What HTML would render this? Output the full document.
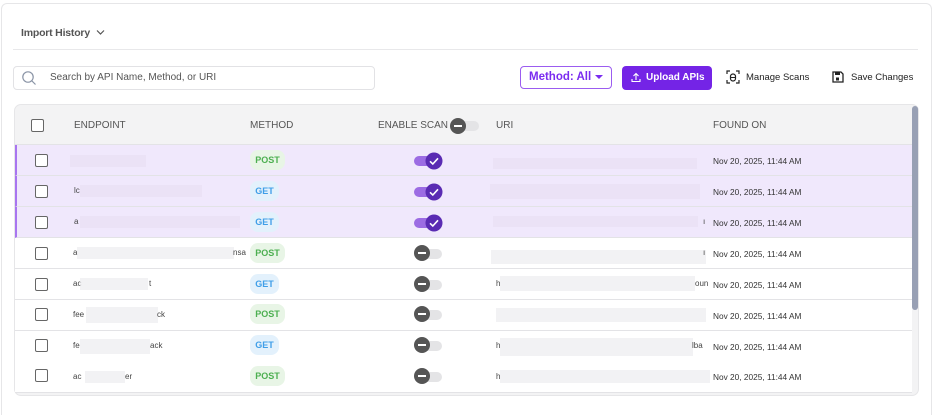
<!DOCTYPE html>
<html><head><meta charset="utf-8"><style>
*{box-sizing:border-box;margin:0;padding:0}
html,body{width:936px;height:415px;overflow:hidden}
body{background:#fff;font-family:"Liberation Sans",sans-serif;position:relative;color:#333}
.a{position:absolute}
.card{left:1px;top:3px;width:931px;height:412px;border:1px solid #e6e6e8;border-bottom:none;border-radius:6px 6px 0 0;background:#fff}
.hdr{font-size:10px;color:#555}
.cb{width:13px;height:13px;border:1.5px solid #666;border-radius:2px;background:#fff}
.row{left:15px;width:897px;height:31px;border-bottom:1px solid #e3e3e6}
.sel{background:#f0e8fc}
.ep{font-size:8px;color:#444}
.bl{background:#ededf0;height:12px;opacity:.7}
.m{font-size:9px;font-weight:bold;border-radius:8px;height:20px;line-height:20px;text-align:center}
.post{background:#e8f5e6;color:#4caf50;width:35px}
.get{background:#e3f1fc;color:#3f9ee8;width:29px}
.d{font-size:8.3px;color:#333}
.ton{width:27px;height:10px;border-radius:5px;background:#9c6ce3}
.toff{width:27px;height:10px;border-radius:5px;background:#e4e4e6}
.koff{width:16px;height:16px;border-radius:50%;background:#555}
.koff:after{content:"";position:absolute;left:4px;top:7px;width:8px;height:2px;background:#fff}
</style></head><body>
<div class="a card"></div>
<div class="a" style="left:21px;top:27px;font-size:10.5px;color:#555;font-weight:bold;letter-spacing:-.2px">Import History</div>
<svg class="a" style="left:96px;top:29px" width="9" height="7"><path d="M1 1.5 4.5 5 8 1.5" fill="none" stroke="#555" stroke-width="1.2"/></svg>
<div class="a" style="left:13px;top:49px;width:905px;height:1px;background:#e8e8ea"></div>
<div class="a" style="left:13px;top:66px;width:362px;height:24px;border:1px solid #e2e2e5;border-radius:4px"></div>
<svg class="a" style="left:21px;top:70px" width="16" height="16"><circle cx="7" cy="7" r="5.2" fill="none" stroke="#8a94a6" stroke-width="1.2"/><path d="M11 11 14.5 14.5" stroke="#8a94a6" stroke-width="1.2"/></svg>
<div class="a" style="left:50px;top:72px;font-size:10px;color:#555">Search by API Name, Method, or URI</div>
<div class="a" style="left:520px;top:66px;width:92px;height:23px;border:1.5px solid #9b5cf0;border-radius:4px;font-size:11.5px;font-weight:bold;color:#7b2cf0;padding:4px 0 0 8px">Method: All</div>
<svg class="a" style="left:595px;top:75px" width="8" height="5"><path d="M0 0h8L4 4z" fill="#7b2cf0"/></svg>
<div class="a" style="left:622px;top:66px;width:90px;height:24px;background:#7424e6;border-radius:4px;color:#fff;font-size:10px;font-weight:bold;padding:6px 0 0 24px">Upload APIs</div>
<svg class="a" style="left:631px;top:72px" width="10" height="11"><path d="M5 8V1.5M2.5 4 5 1.5 7.5 4M1 7v2.5h8V7" fill="none" stroke="#fff" stroke-width="1.1"/></svg>
<svg class="a" style="left:726px;top:70px" width="14" height="14"><path d="M1 4V1h3M10 1h3v3M13 10v3h-3M4 13H1v-3" fill="none" stroke="#222" stroke-width="1.2"/><rect x="4.5" y="4" width="5" height="7" rx="2.5" fill="none" stroke="#222" stroke-width="1.2"/><path d="M5 7.5h4" stroke="#222"/></svg>
<div class="a" style="left:746px;top:72px;font-size:9.5px;color:#222">Manage Scans</div>
<svg class="a" style="left:832px;top:71px" width="12" height="12"><path d="M1 1h8l2 2v8H1z" fill="none" stroke="#222" stroke-width="1.3"/><rect x="3" y="1" width="5" height="3" fill="#222"/><rect x="4" y="6.5" width="3" height="3" fill="#222"/></svg>
<div class="a" style="left:851px;top:72px;font-size:9.5px;color:#222">Save Changes</div>

<div class="a" style="left:14px;top:104px;width:905px;height:292px;border:1px solid #e6e6e8;border-radius:7px;background:#f3f3f4;overflow:hidden"></div>
<div class="a" style="left:15px;top:105px;width:897px;height:40px;background:#f3f3f4;border-bottom:1px solid #e3e3e6;border-radius:7px 0 0 0"></div>
<div class="a cb" style="left:31px;top:119px"></div>
<div class="a hdr" style="left:74px;top:120px">ENDPOINT</div>
<div class="a hdr" style="left:250px;top:120px">METHOD</div>
<div class="a hdr" style="left:378px;top:120px">ENABLE SCAN</div>
<div class="a toff" style="left:452px;top:121px"></div><div class="a koff" style="left:450px;top:118px"></div>
<div class="a hdr" style="left:496px;top:120px">URI</div>
<div class="a hdr" style="left:713px;top:120px">FOUND ON</div>
<div class="a" style="left:912px;top:106px;width:6px;height:204px;background:#98a0b4;border-radius:3px"></div>

<div class="a row sel" style="top:145px;border-left:2px solid #a875f0"></div>
<div class="a row sel" style="top:176px;border-left:2px solid #a875f0"></div>
<div class="a row sel" style="top:207px;border-left:2px solid #a875f0"></div>
<div class="a row" style="top:238px;background:#fff"></div>
<div class="a row" style="top:269px;background:#fff"></div>
<div class="a row" style="top:300px;background:#fff"></div>
<div class="a row" style="top:331px;background:#fff"></div>
<div class="a row" style="top:361px;background:#fff;height:32px"></div>

<div class="a cb" style="left:35px;top:154px"></div>
<div class="a cb" style="left:35px;top:185px"></div>
<div class="a cb" style="left:35px;top:216px"></div>
<div class="a cb" style="left:35px;top:247px"></div>
<div class="a cb" style="left:35px;top:278px"></div>
<div class="a cb" style="left:35px;top:308px"></div>
<div class="a cb" style="left:35px;top:339px"></div>
<div class="a cb" style="left:35px;top:369px"></div>

<div class="a bl" style="left:70px;top:155px;width:76px;background:#e8e0f4"></div>
<div class="a ep" style="left:74px;top:186px">lc</div><div class="a bl" style="left:80px;top:185px;width:122px;background:#e8e0f4"></div>
<div class="a ep" style="left:74px;top:217px">a</div><div class="a bl" style="left:80px;top:216px;width:160px;background:#e8e0f4"></div>
<div class="a ep" style="left:73px;top:248px">a</div><div class="a bl" style="left:77px;top:247px;width:157px"></div><div class="a ep" style="left:233px;top:248px">nsa</div>
<div class="a ep" style="left:73px;top:279px">ac</div><div class="a bl" style="left:80px;top:278px;width:68px"></div><div class="a ep" style="left:149px;top:279px">t</div>
<div class="a ep" style="left:73px;top:310px">fee</div><div class="a bl" style="left:86px;top:307px;width:72px;height:16px"></div><div class="a ep" style="left:157px;top:310px">ck</div>
<div class="a ep" style="left:73px;top:341px">fe</div><div class="a bl" style="left:80px;top:339px;width:70px;height:15px"></div><div class="a ep" style="left:150px;top:341px">ack</div>
<div class="a ep" style="left:73px;top:372px">ac</div><div class="a bl" style="left:85px;top:371px;width:40px"></div><div class="a ep" style="left:125px;top:372px">er</div>

<div class="a m post" style="left:250px;top:150px">POST</div>
<div class="a m get" style="left:250px;top:181px">GET</div>
<div class="a m get" style="left:250px;top:212px">GET</div>
<div class="a m post" style="left:250px;top:243px">POST</div>
<div class="a m get" style="left:250px;top:274px">GET</div>
<div class="a m post" style="left:250px;top:304px">POST</div>
<div class="a m get" style="left:250px;top:335px">GET</div>
<div class="a m post" style="left:250px;top:366px">POST</div>

<div class="a ton" style="left:414px;top:156px"></div><svg class="a" style="left:425px;top:152px" width="18" height="18"><circle cx="9" cy="9" r="8.5" fill="#5a2bb3"/><path d="M5 9.3 7.8 12 13 6.3" fill="none" stroke="#fff" stroke-width="1.6"/></svg>
<div class="a ton" style="left:414px;top:187px"></div><svg class="a" style="left:425px;top:183px" width="18" height="18"><circle cx="9" cy="9" r="8.5" fill="#5a2bb3"/><path d="M5 9.3 7.8 12 13 6.3" fill="none" stroke="#fff" stroke-width="1.6"/></svg>
<div class="a ton" style="left:414px;top:218px"></div><svg class="a" style="left:425px;top:214px" width="18" height="18"><circle cx="9" cy="9" r="8.5" fill="#5a2bb3"/><path d="M5 9.3 7.8 12 13 6.3" fill="none" stroke="#fff" stroke-width="1.6"/></svg>
<div class="a toff" style="left:415px;top:249px"></div><div class="a koff" style="left:414px;top:245px"></div>
<div class="a toff" style="left:415px;top:280px"></div><div class="a koff" style="left:414px;top:276px"></div>
<div class="a toff" style="left:415px;top:310px"></div><div class="a koff" style="left:414px;top:306px"></div>
<div class="a toff" style="left:415px;top:341px"></div><div class="a koff" style="left:414px;top:337px"></div>
<div class="a toff" style="left:415px;top:372px"></div><div class="a koff" style="left:414px;top:368px"></div>

<div class="a bl" style="left:493px;top:158px;width:204px;height:11px;background:#e8e0f4"></div>
<div class="a bl" style="left:490px;top:184px;width:210px;height:15px;background:#e8e0f4"></div>
<div class="a bl" style="left:493px;top:216px;width:205px;height:11px;background:#e8e0f4"></div><div class="a ep" style="left:703px;top:217px">ı</div>
<div class="a bl" style="left:491px;top:250px;width:215px;height:14px"></div><div class="a ep" style="left:703px;top:248px">ı</div>
<div class="a ep" style="left:496px;top:279px">h</div><div class="a bl" style="left:500px;top:276px;width:195px;height:15px"></div><div class="a ep" style="left:695px;top:279px">oun</div>
<div class="a bl" style="left:496px;top:308px;width:210px;height:14px"></div>
<div class="a ep" style="left:496px;top:341px">h</div><div class="a bl" style="left:500px;top:338px;width:193px;height:18px"></div><div class="a ep" style="left:692px;top:341px">lba</div>
<div class="a ep" style="left:496px;top:372px">h</div><div class="a bl" style="left:500px;top:370px;width:210px;height:13px"></div>

<div class="a d" style="left:713px;top:156px">Nov 20, 2025, 11:44 AM</div>
<div class="a d" style="left:713px;top:187px">Nov 20, 2025, 11:44 AM</div>
<div class="a d" style="left:713px;top:218px">Nov 20, 2025, 11:44 AM</div>
<div class="a d" style="left:713px;top:249px">Nov 20, 2025, 11:44 AM</div>
<div class="a d" style="left:713px;top:280px">Nov 20, 2025, 11:44 AM</div>
<div class="a d" style="left:713px;top:311px">Nov 20, 2025, 11:44 AM</div>
<div class="a d" style="left:713px;top:342px">Nov 20, 2025, 11:44 AM</div>
<div class="a d" style="left:713px;top:372px">Nov 20, 2025, 11:44 AM</div>
</body></html>
